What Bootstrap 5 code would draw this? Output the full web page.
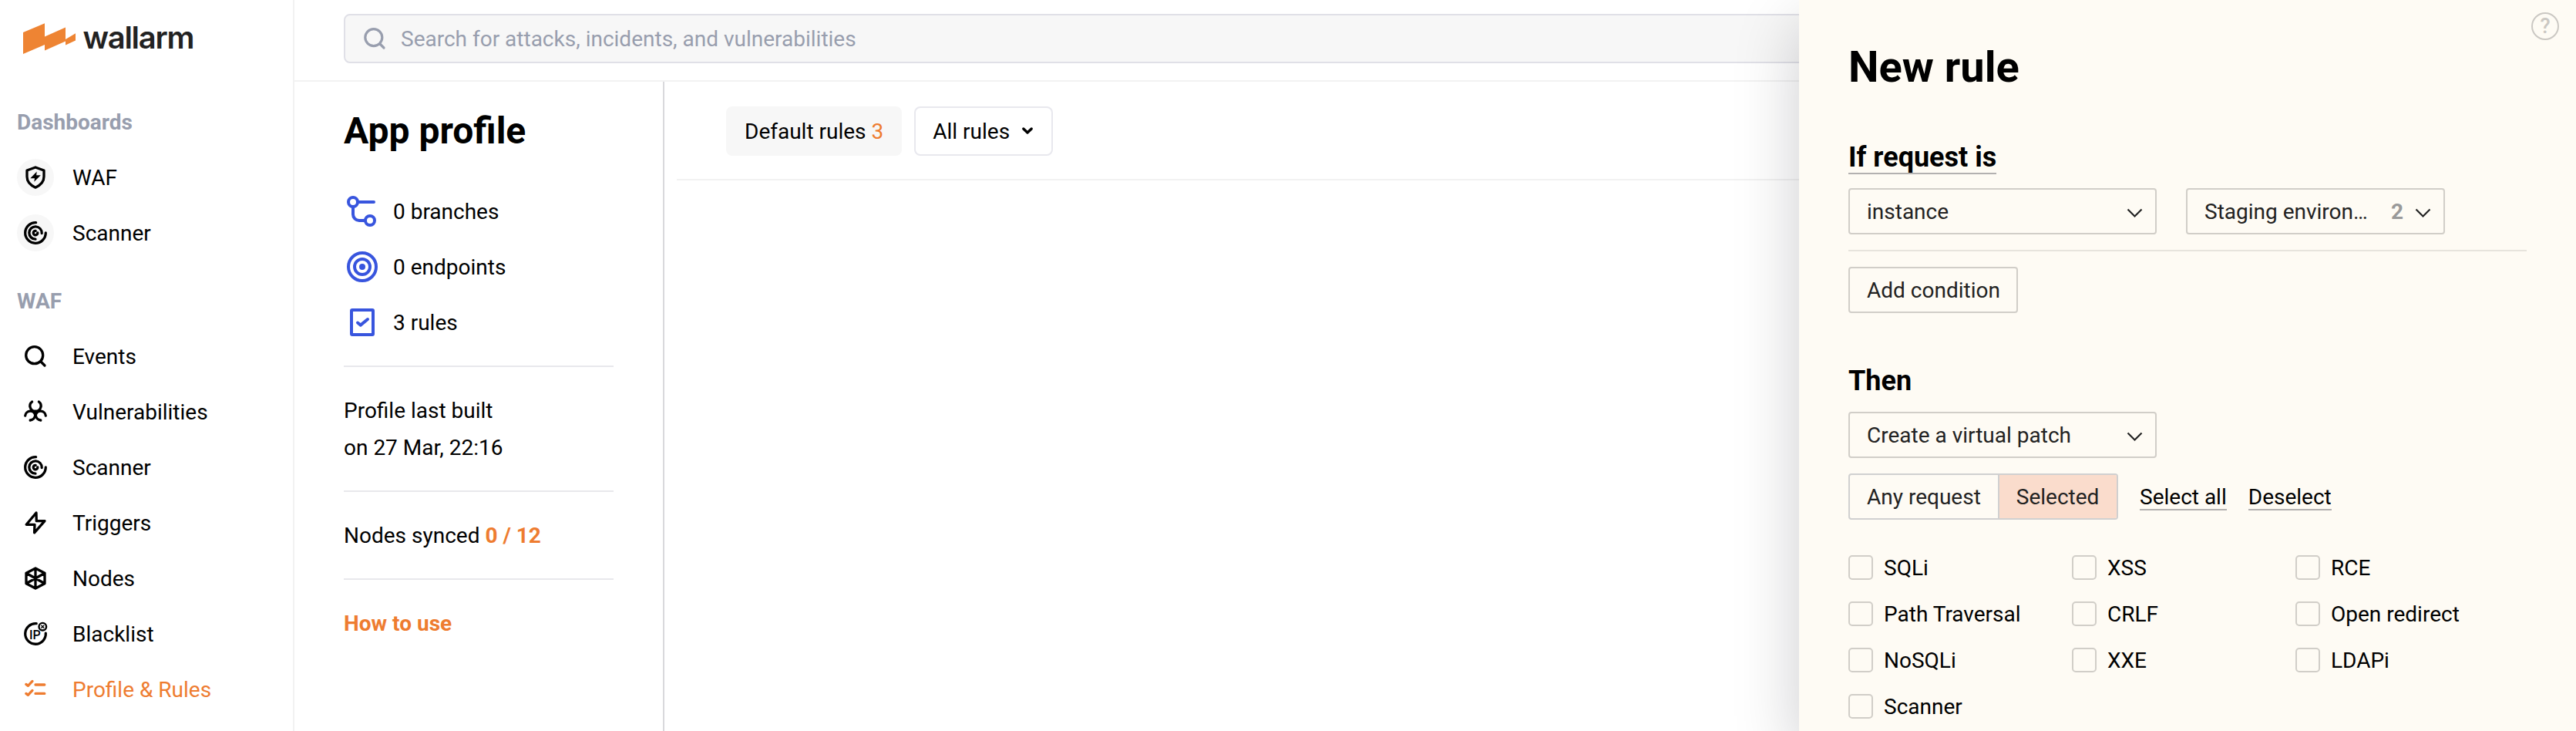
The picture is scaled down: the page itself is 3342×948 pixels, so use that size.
<!DOCTYPE html>
<html lang="en">
<head>
<meta charset="utf-8">
<title>Wallarm – Profile &amp; Rules</title>
<link href="https://cdn.jsdelivr.net/npm/bootstrap@5.3.0/dist/css/bootstrap.min.css" rel="stylesheet">
<style>
  :root { --orange: #ee7c30; --line: #f2f2f2; --cream: #fefbf4; --field: #d1cec8; }
  body { font-family: Roboto, "Liberation Sans", sans-serif; font-size: 28px; line-height: 48px; color: #000; background: #fff; }
  .orange { color: var(--orange); }
  svg { display: block; flex: none; }

  /* Sidebar */
  .sidebar { width: 382px; border-right: 2px solid var(--line); }
  .brand { height: 134px; padding: 24px 0 0 22px; }
  .nav-title { color: #989eae; font-weight: 700; padding: 1px 0 0 22px; height: 48px; margin-bottom: 24px; }
  .side-list { gap: 24px; margin-bottom: 40px; }
  .side-link { color: #000; padding: 2px 0 0 22px; gap: 24px; height: 48px; display: flex; align-items: center; }
  .side-link svg { margin-top: -2px; fill: none; stroke: currentColor; stroke-width: 3.3; stroke-linecap: round; stroke-linejoin: round; }
  .side-link.active { color: var(--orange); }
  .dot { border-radius: 50%; background: #f7f7f7; }

  /* Header */
  .topbar { height: 106px; padding: 18px 64px 0; border-bottom: 2px solid var(--line); }
  .search { height: 64px; border: 2px solid #e0e0e7; border-radius: 8px; background: #f7f7f7; color: #989eae; padding: 2px 0 0 18px; gap: 14px; }
  .search svg { margin-top: -2px; }

  /* Profile column */
  .profile { width: 480px; padding: 32px 64px; border-right: 2px solid #d9d9dc; }
  .profile h1 { font-size: 48px; line-height: 64px; font-weight: 700; margin-bottom: 48px; }
  .profile hr { margin: 32px 0; border: 0; border-top: 2px solid #e8e8ec; opacity: 1; }
  .note { padding-top: 1px; margin-bottom: -1px; }
  .stats { gap: 24px; }
  .stats svg { margin-top: -2px; fill: none; stroke: #3855de; stroke-width: 4; stroke-linecap: round; stroke-linejoin: round; }
  .stats li { height: 48px; gap: 16px; padding-top: 2px; }

  .rules-bar { margin-left: 16px; padding: 32px 64px 30px; gap: 16px; border-bottom: 2px solid var(--line); }
  .chip { height: 64px; padding: 1px 22px 0; border: 2px solid #f7f7f7; border-radius: 8px; line-height: 60px; color: #000; }
  .chip-fill { background: #f7f7f7; }
  .chip-line { background: #fff; border-color: #e8e8ee; gap: 14px; }
  .chip-line svg { margin-top: -2px; }

  /* New rule panel */
  .panel { width: 1008px; padding: 49px 64px; background: var(--cream); box-shadow: 0 32px 80px rgba(0, 0, 20, .2); }
  .panel h2 { font-size: 56px; line-height: 76px; font-weight: 700; margin: 0 0 59px; }
  .panel h3 { font-size: 36px; line-height: 40px; font-weight: 700; margin: 0; }
  .panel .then { margin: 68px 0 20px; }
  .lined { border-bottom: 2px solid #b3b1b0; }
  .condition { margin-top: 18px; gap: 38px; }
  .field { height: 60px; border: 2px solid var(--field); border-radius: 4px; padding: 1px 22px 0; color: #222; line-height: 56px; }
  .field svg { margin-right: -11px; fill: none; stroke: #222; stroke-width: 2.2; }
  .w-std { width: 400px; }
  .w-env { width: 336px; }
  .w-add { width: 220px; white-space: nowrap; }
  .count { color: #999; font-weight: 700; margin-right: 11px; }
  .panel-rule { width: 880px; margin: 20px 0; border: 0; border-top: 2px solid #e7e4dd; opacity: 1; }
  .match { margin-top: 20px; gap: 28px; }
  .seg { width: 350px; height: 60px; border: 2px solid #d0d0d0; border-radius: 4px; line-height: 56px; color: #222; overflow: hidden; }
  .seg span { padding: 1px 22px 0; white-space: nowrap; }
  .seg .on { flex: 1; background: #fadccc; border-left: 2px solid #d0d0d0; }
  .text-act { line-height: 41px; height: 38px; margin-top: 10px; color: #000; border-bottom: 2px solid #b3b1b0; }
  .checks { display: grid; grid-template-columns: repeat(3, 290px); row-gap: 28px; margin-top: 46px; }
  .checks label { height: 32px; line-height: 34px; gap: 14px; }
  .checks .form-check-input { width: 32px; height: 32px; margin: 0; border: 2px solid var(--field); border-radius: 5px; background-color: transparent; }
  .help { top: 16px; right: 22px; width: 36px; height: 36px; border: 2px solid #cbc8c3; border-radius: 50%; color: #cbc8c3; font-weight: 500; font-size: 27px; line-height: 33px; }
</style>
</head>
<body class="vh-100 overflow-hidden position-relative">
<div class="d-flex h-100">

  <nav class="sidebar flex-shrink-0">
    <div class="brand">
      <svg width="240" height="52" viewBox="22 24 240 52">
        <path fill="#ee8433" d="M30 42 58 30.2V47.5L85 35.4V51L98 43.3V52.6L85 58.4V53.6L58 65.6V58L30 70Z"/>
        <text x="107.5" y="63" font-family="Inter, sans-serif" font-weight="600" font-size="40" textLength="145" fill="#222">wallarm</text>
      </svg>
    </div>
    <div class="nav-title">Dashboards</div>
    <div class="nav flex-column side-list">
      <a class="side-link text-decoration-none"><svg class="dot" width="48" height="48"><path d="M24 11 35 15V23C35 30 30 34.5 24 37.2 18 34.5 13 30 13 23V15Z"/><path fill="#000" stroke="none" d="M25.7 16.5 17.3 25.2H23L22.3 29.8 30.8 21.3H25.2Z"/></svg>WAF</a>
      <a class="side-link text-decoration-none"><svg class="dot" width="48" height="48"><path d="M24.6 10.7A13.3 13.3 0 1 0 37.3 24M32.2 24.5A8.2 8.2 0 1 0 24 32.2M24.2 21.3A2.8 2.8 0 1 0 26.8 23.8"/></svg>Scanner</a>
    </div>
    <div class="nav-title">WAF</div>
    <div class="nav flex-column side-list">
      <a class="side-link text-decoration-none"><svg width="48" height="48"><circle cx="22.7" cy="22.7" r="11"/><path d="M31 31 36 36"/></svg>Events</a>
      <a class="side-link text-decoration-none"><svg width="48" height="48"><path d="M19.6 11A6.8 6.8 0 0 0 24 23.2 6.8 6.8 0 0 0 28.4 11M10.7 29.2A6.6 6.6 0 0 1 23.7 28.2 7.2 7.2 0 0 1 17.2 35M37.3 29.2A6.6 6.6 0 0 0 24.3 28.2 7.2 7.2 0 0 0 30.8 35"/></svg>Vulnerabilities</a>
      <a class="side-link text-decoration-none"><svg width="48" height="48"><path d="M24.6 10.7A13.3 13.3 0 1 0 37.3 24M32.2 24.5A8.2 8.2 0 1 0 24 32.2M24.2 21.3A2.8 2.8 0 1 0 26.8 23.8"/></svg>Scanner</a>
      <a class="side-link text-decoration-none"><svg width="48" height="48"><path d="M25 11 12.2 26.3H23L22.6 36.8 36 21.6H25.3Z"/></svg>Triggers</a>
      <a class="side-link text-decoration-none"><svg width="48" height="48"><path d="M24 11 36 17.3V30.7L24 37 12 30.7V17.3ZM24 11V37M12 17.3 36 30.7M36 17.3 12 30.7"/></svg>Nodes</a>
      <a class="side-link text-decoration-none"><svg width="48" height="48"><path d="M25.2 10.7A13.3 13.3 0 1 0 37.3 23.2"/><circle cx="33.3" cy="14.7" r="4.8" stroke-width="2.4"/><path stroke-width="1.4" d="M31.8 13.2 34.8 16.2M34.8 13.2 31.8 16.2"/><text x="16" y="30.5" font-size="16" font-weight="500" fill="#000" stroke="none">IP</text></svg>Blacklist</a>
      <a class="side-link active text-decoration-none"><svg width="48" height="48"><path d="M11.8 17.4 14.4 19.4 20 13.4M24 18H35.8M11.8 29.4 14.4 31.4 20 25.4M24 29.4H35.8"/></svg>Profile &amp; Rules</a>
    </div>
  </nav>

  <div class="flex-grow-1 d-flex flex-column">
    <header class="topbar">
      <div class="search d-flex align-items-center">
        <svg width="40" height="40" fill="none" stroke="#989eae" stroke-width="3.2" stroke-linecap="round"><circle cx="18.8" cy="18.6" r="11"/><path d="M27 27 32 32"/></svg>
        <span>Search for attacks, incidents, and vulnerabilities</span>
      </div>
    </header>
    <div class="d-flex flex-grow-1">
      <section class="profile flex-shrink-0">
        <h1>App profile</h1>
        <ul class="stats list-unstyled d-flex flex-column mb-0">
          <li class="d-flex align-items-center"><svg width="48" height="48"><circle cx="12" cy="12" r="6"/><circle cx="34" cy="36" r="6"/><path d="M18 12H39M12 18V28A8 8 0 0 0 20 36H28"/></svg>0 branches</li>
          <li class="d-flex align-items-center"><svg width="48" height="48"><circle cx="24" cy="24" r="18"/><circle cx="24" cy="24" r="10"/><circle cx="24" cy="24" r="2"/></svg>0 endpoints</li>
          <li class="d-flex align-items-center"><svg width="48" height="48"><rect x="10" y="8" width="28" height="32" rx="1"/><path d="M18 24.5 21.8 27.6 31 20"/></svg>3 rules</li>
        </ul>
        <hr>
        <div class="note">Profile last built<br>on 27 Mar, 22:16</div>
        <hr>
        <div class="note">Nodes synced <b class="orange">0 / 12</b></div>
        <hr>
        <div class="note"><a class="orange fw-bold text-decoration-none">How to use</a></div>
      </section>
      <main class="flex-grow-1">
        <div class="rules-bar d-flex">
          <div class="chip chip-fill">Default rules <span class="orange">3</span></div>
          <div class="chip chip-line d-flex align-items-center">All rules
            <svg width="18" height="12" fill="none" stroke="#000" stroke-width="3.4" stroke-linecap="round" stroke-linejoin="round"><path d="M3.8 3 9 8 14.2 3"/></svg>
          </div>
        </div>
      </main>
    </div>
  </div>
</div>

<aside class="panel position-absolute top-0 end-0 h-100">
  <div class="help position-absolute text-center">?</div>
  <h2>New rule</h2>
  <div class="d-flex"><h3 class="lined">If request is</h3></div>
  <div class="condition d-flex">
    <div class="field w-std d-flex align-items-center justify-content-between">instance
      <svg width="30" height="20"><path d="M5.5 6.5 14.5 15.5 23.5 6.5"/></svg></div>
    <div class="field w-env d-flex align-items-center">Staging environ…
      <span class="count ms-auto">2</span>
      <svg width="30" height="20"><path d="M5.5 6.5 14.5 15.5 23.5 6.5"/></svg></div>
  </div>
  <hr class="panel-rule">
  <div class="field w-add">Add condition</div>
  <h3 class="then">Then</h3>
  <div class="field w-std d-flex align-items-center justify-content-between">Create a virtual patch
    <svg width="30" height="20"><path d="M5.5 6.5 14.5 15.5 23.5 6.5"/></svg></div>
  <div class="match d-flex align-items-start">
    <div class="seg d-flex"><span>Any request</span><span class="on">Selected</span></div>
    <a class="text-act text-decoration-none">Select all</a>
    <a class="text-act text-decoration-none">Deselect</a>
  </div>
  <div class="checks">
    <label class="d-flex"><input class="form-check-input" type="checkbox">SQLi</label>
    <label class="d-flex"><input class="form-check-input" type="checkbox">XSS</label>
    <label class="d-flex"><input class="form-check-input" type="checkbox">RCE</label>
    <label class="d-flex"><input class="form-check-input" type="checkbox">Path Traversal</label>
    <label class="d-flex"><input class="form-check-input" type="checkbox">CRLF</label>
    <label class="d-flex"><input class="form-check-input" type="checkbox">Open redirect</label>
    <label class="d-flex"><input class="form-check-input" type="checkbox">NoSQLi</label>
    <label class="d-flex"><input class="form-check-input" type="checkbox">XXE</label>
    <label class="d-flex"><input class="form-check-input" type="checkbox">LDAPi</label>
    <label class="d-flex"><input class="form-check-input" type="checkbox">Scanner</label>
  </div>
</aside>
<script src="https://cdn.jsdelivr.net/npm/bootstrap@5.3.0/dist/js/bootstrap.bundle.min.js"></script>
</body>
</html>
